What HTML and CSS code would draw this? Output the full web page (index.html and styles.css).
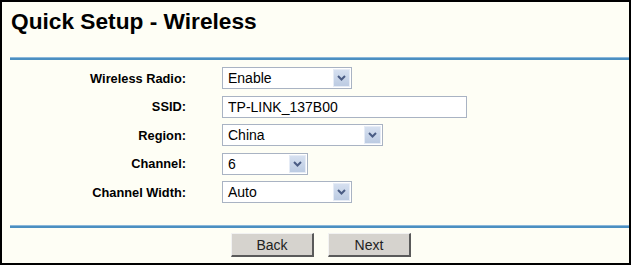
FILE: index.html
```html
<!DOCTYPE html>
<html lang="en">
<head>
    <meta charset="UTF-8">
    <title>Quick Setup - Wireless</title>
    <link rel="stylesheet" href="styles.css">
</head>
<body>
    <div class="panel">
        <h1 class="titulo">Quick Setup - Wireless</h1>
        <div class="linha"></div>

        <div class="campos">
            <label class="rotulo">Wireless Radio:</label>
            <div class="select w130">
                <span>Enable</span>
                <span class="seta">
                    <svg width="9" height="6" viewBox="0 0 9 6"><path d="M1 1 L4.5 4.5 L8 1" fill="none" stroke="#4a5c84" stroke-width="2"/></svg>
                </span>
            </div>

            <label class="rotulo">SSID:</label>
            <input class="texto" type="text" value="TP-LINK_137B00">

            <label class="rotulo">Region:</label>
            <div class="select w161">
                <span>China</span>
                <span class="seta">
                    <svg width="9" height="6" viewBox="0 0 9 6"><path d="M1 1 L4.5 4.5 L8 1" fill="none" stroke="#4a5c84" stroke-width="2"/></svg>
                </span>
            </div>

            <label class="rotulo">Channel:</label>
            <div class="select w86">
                <span>6</span>
                <span class="seta">
                    <svg width="9" height="6" viewBox="0 0 9 6"><path d="M1 1 L4.5 4.5 L8 1" fill="none" stroke="#4a5c84" stroke-width="2"/></svg>
                </span>
            </div>

            <label class="rotulo">Channel Width:</label>
            <div class="select w130">
                <span>Auto</span>
                <span class="seta">
                    <svg width="9" height="6" viewBox="0 0 9 6"><path d="M1 1 L4.5 4.5 L8 1" fill="none" stroke="#4a5c84" stroke-width="2"/></svg>
                </span>
            </div>
        </div>

        <div class="linha linha-baixo"></div>

        <div class="botoes">
            <button class="botao" type="button">Back</button>
            <button class="botao" type="button">Next</button>
        </div>
    </div>
</body>
</html>
```

FILE: styles.css
```css
body {
    margin: 0;
    background-color: #ffffff;
    font-family: "Liberation Sans", Arial, sans-serif;
}
.panel {
    width: 627px;
    border: 2px solid #000000;
    background-color: #fefef5;
    padding-bottom: 6px;
}
.titulo {
    margin: 0;
    padding: 7px 0 0 9px;
    height: 25px;
    line-height: 25px;
    font-size: 22.7px;
    font-weight: bold;
    color: #000000;
}
.linha {
    height: 3px;
    margin: 23px 0 0 8px;
    background-color: #4b8fc1;
    border-top: 1px solid #8cb8da;
    box-sizing: border-box;
}
.linha-baixo {
    margin-top: 22px;
}
.campos {
    display: grid;
    grid-template-columns: 184px auto;
    column-gap: 36px;
    row-gap: 6.5px;
    justify-items: start;
    align-items: center;
    margin-top: 7px;
}
.rotulo {
    justify-self: end;
    font-size: 12.8px;
    font-weight: bold;
    color: #000000;
}
.select {
    display: flex;
    align-items: center;
    justify-content: space-between;
    height: 22px;
    box-sizing: border-box;
    border: 1px solid #a9b3c3;
    background-color: #ffffff;
    padding: 1px 1px 1px 5px;
    font-size: 14px;
    color: #000000;
}
.w130 { width: 130px; }
.w161 { width: 161px; }
.w86 { width: 86px; }
.seta {
    display: flex;
    align-items: center;
    justify-content: center;
    width: 17px;
    height: 18px;
    border: 1px solid #e6ecf6;
    box-sizing: border-box;
    background: linear-gradient(#d6e0f0, #bccbe2);
}
.texto {
    width: 245px;
    height: 22px;
    box-sizing: border-box;
    margin: 0;
    border: 1px solid #a9b3c3;
    background-color: #ffffff;
    padding: 0 5px;
    font-family: "Liberation Sans", Arial, sans-serif;
    font-size: 14px;
    color: #000000;
}
.botoes {
    display: flex;
    gap: 14px;
    padding: 5px 0 0 229px;
}
.botao {
    width: 83px;
    height: 24px;
    margin: 0;
    padding: 0;
    background-color: #d6d3ce;
    border-style: solid;
    border-width: 1px 2px 2px 1px;
    border-color: #f2f2f2 #5a5a5a #5a5a5a #f2f2f2;
    font-family: "Liberation Sans", Arial, sans-serif;
    font-size: 14px;
    color: #222222;
}
```
